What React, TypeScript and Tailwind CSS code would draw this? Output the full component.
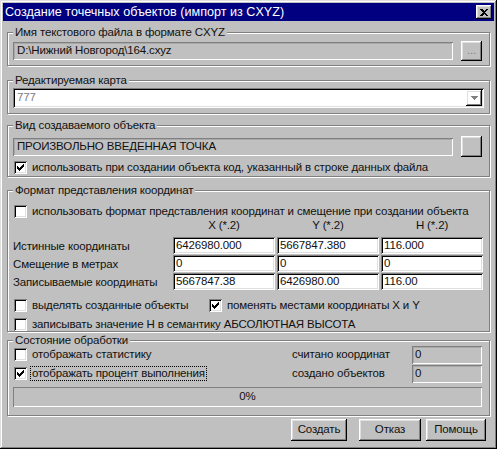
import React from 'react';

const raised = 'shadow-[inset_-1px_-1px_0_#000,inset_1px_1px_0_#fff,inset_-2px_-2px_0_#808080,inset_2px_2px_0_#dfdfdf]';
const sunken = 'shadow-[inset_1px_1px_0_#808080,inset_-1px_-1px_0_#fff,inset_2px_2px_0_#000,inset_-2px_-2px_0_#dfdfdf]';
const flat = 'shadow-[inset_1px_1px_0_#808080,inset_-1px_-1px_0_#fff,inset_2px_2px_0_#a8a8a8]';

const CheckMark = () => (
    <svg width="7" height="7" viewBox="0 0 7 7" shapeRendering="crispEdges">
        <path
            d="M6 0h1v1h-1z M5 1h2v1h-2z M0 2h1v1h-1z M4 2h3v1h-3z M0 3h2v1h-2z M3 3h3v1h-3z M0 4h5v1h-5z M1 5h3v1h-3z M2 6h1v1h-1z"
            fill="#000"
        />
    </svg>
);

const Check: React.FC<{ on?: boolean; label: string; focus?: boolean }> = ({ on, label, focus }) => (
    <div className="flex items-center gap-[4px]">
        <span className={`w-[13px] h-[13px] shrink-0 bg-white flex items-center justify-center ${sunken}`}>
            {on && <CheckMark />}
        </span>
        <span className={`leading-[13px] px-[1px] ${focus ? 'outline outline-1 outline-dotted outline-[#000]' : ''}`}>{label}</span>
    </div>
);

const Group: React.FC<{ title: string; className?: string; children: React.ReactNode }> = ({ title, className, children }) => (
    <div className={`flex flex-col border border-[#808080] shadow-[inset_1px_1px_0_#fff,1px_1px_0_#fff] pl-[5px] pr-[6px] ${className ?? ''}`}>
        <div className="-mt-[8px] self-start bg-[#c0c0c0] px-[2px] leading-[14px]">{title}</div>
        {children}
    </div>
);

const Edit: React.FC<{ value: string; className?: string }> = ({ value, className }) => (
    <div className={`bg-white flex items-center pl-[3px] leading-none ${sunken} ${className ?? ''}`}>{value}</div>
);

const Button: React.FC<{ label: string; className?: string }> = ({ label, className }) => (
    <div className={`flex items-center justify-center bg-[#c0c0c0] ${raised} ${className ?? ''}`}>{label}</div>
);

export default function App() {
    return (
        <div className="w-[497px] h-[449px] bg-[#c0c0c0] p-[3px] flex flex-col text-[11.5px] tracking-[-0.15px] text-[#111] font-['Liberation_Sans',Arial,sans-serif] shadow-[inset_-1px_-1px_0_#000,inset_1px_1px_0_#dfdfdf,inset_-2px_-2px_0_#808080,inset_2px_2px_0_#fff]">
            {/* title bar */}
            <div className="h-[18px] bg-[#000080] flex items-center justify-between pl-[2px] pr-[2px]">
                <span className="text-white text-[12.6px] tracking-normal leading-none">Создание точечных объектов (импорт из CXYZ)</span>
                <div className={`w-[16px] h-[14px] flex items-center justify-center bg-[#c0c0c0] ${raised}`}>
                    <svg width="8" height="7" viewBox="0 0 8 7" shapeRendering="crispEdges">
                        <path d="M0 0h2l2 2 2-2h2L5 3.5 8 7H6L4 5 2 7H0l3-3.5z" fill="#000" />
                    </svg>
                </div>
            </div>

            <div className="flex flex-col mx-[4px]">
                <Group title="Имя текстового файла в формате CXYZ" className="mt-[11px] h-[34px]">
                    <div className="mt-[2px] h-[20px] flex items-center">
                        <div className={`w-[440px] h-[18px] flex items-center pl-[4px] ${flat}`}>D:\Нижний Новгород\164.cxyz</div>
                        <Button label="..." className="ml-auto w-[21px] h-[20px] text-[#808080] mr-[1px]" />
                    </div>
                </Group>

                <Group title="Редактируемая карта" className="mt-[14px] h-[34px]">
                    <div className={`mt-[1px] h-[20px] bg-white flex items-center pl-[4px] pr-[2px] mr-[-1px] ${sunken}`}>
                        <span className="text-[#808080]">777</span>
                        <div className={`ml-auto w-[16px] h-[16px] flex items-center justify-center ${raised}`}>
                            <svg width="7" height="4" viewBox="0 0 7 4" shapeRendering="crispEdges">
                                <path d="M0 0h7L3.5 4z" fill="#808080" />
                            </svg>
                        </div>
                    </div>
                </Group>

                <Group title="Вид создаваемого объекта" className="mt-[11px] h-[52px]">
                    <div className="mt-[4px] h-[21px] flex items-center">
                        <div className={`w-[440px] h-[18px] flex items-center pl-[4px] ${flat}`}>ПРОИЗВОЛЬНО ВВЕДЕННАЯ ТОЧКА</div>
                        <Button label="" className="ml-auto w-[21px] h-[21px] mr-[1px]" />
                    </div>
                    <div className="mt-[4px] pl-[1px]">
                        <Check on label="использовать при создании объекта код, указанный  в строке данных файла" />
                    </div>
                </Group>

                <Group title="Формат представления координат" className="mt-[13px] h-[142px]">
                    <div className="mt-[8px] pl-[1px]">
                        <Check label="использовать формат представления координат и смещение при создании объекта" />
                    </div>
                    <div className="mt-[1px] grid grid-cols-[158px_102px_102px_102px] gap-x-[2px] gap-y-[1px] auto-rows-[17px]">
                        <div className="h-[12px]" />
                        <div className="h-[12px] leading-[12px] text-center">X (*.2)</div>
                        <div className="h-[12px] leading-[12px] text-center">Y (*.2)</div>
                        <div className="h-[12px] leading-[12px] text-center">Н (*.2)</div>

                        <div className="flex items-center pt-[3px]">Истинные координаты</div>
                        <Edit value="6426980.000" />
                        <Edit value="5667847.380" />
                        <Edit value="116.000" />

                        <div className="flex items-center pt-[3px]">Смещение в метрах</div>
                        <Edit value="0" />
                        <Edit value="0" />
                        <Edit value="0" />

                        <div className="flex items-center pt-[3px]">Записываемые координаты</div>
                        <Edit value="5667847.38" />
                        <Edit value="6426980.00" />
                        <Edit value="116.00" />
                    </div>
                    <div className="mt-[9px] pl-[1px] flex">
                        <div className="w-[195px]">
                            <Check label="выделять созданные объекты" />
                        </div>
                        <Check on label="поменять местами координаты X и Y" />
                    </div>
                    <div className="mt-[6px] pl-[1px]">
                        <Check label="записывать значение Н в семантику АБСОЛЮТНАЯ ВЫСОТА" />
                    </div>
                </Group>

                <Group title="Состояние обработки" className="mt-[8px] h-[76px]">
                    <div className="flex">
                        <div className="flex flex-col pl-[1px] gap-[6px] pt-[1px]">
                            <Check label="отображать статистику" />
                            <Check on focus label="отображать процент выполнения" />
                        </div>
                        <div className="ml-auto mr-[1px] grid grid-cols-[120px_70px] gap-y-[1px] auto-rows-[18px] -mt-[1px]">
                            <div className="flex items-center">считано координат</div>
                            <div className={`flex items-center pl-[3px] ${flat}`}>0</div>
                            <div className="flex items-center">создано объектов</div>
                            <div className={`flex items-center pl-[3px] ${flat}`}>0</div>
                        </div>
                    </div>
                    <div className="mt-[4px] mr-[1px] h-[20px] flex items-center justify-center shadow-[inset_1px_1px_0_#808080,inset_-1px_-1px_0_#fff]">
                        0%
                    </div>
                </Group>

                <div className="mt-[3px] flex justify-end mr-[4px]">
                    <Button label="Создать" className="w-[56px] h-[22px]" />
                    <Button label="Отказ" className="w-[62px] h-[22px] ml-[12px]" />
                    <Button label="Помощь" className="w-[60px] h-[22px] ml-[5px]" />
                </div>
            </div>
        </div>
    );
}
